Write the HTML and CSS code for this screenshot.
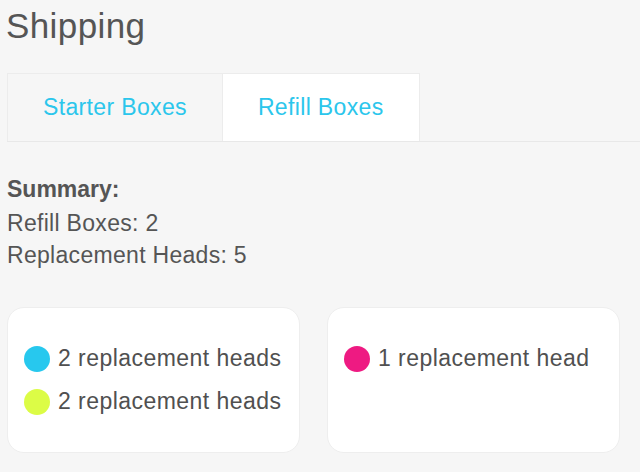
FILE: index.html
```html
<!DOCTYPE html>
<html lang="en">
<head>
<meta charset="utf-8">
<title>Shipping</title>
<link rel="stylesheet" href="styles.css">
</head>
<body>
<main class="page">
  <h1 class="title">Shipping</h1>
  <nav class="tabs">
    <div class="tab">Starter Boxes</div>
    <div class="tab tab-active">Refill Boxes</div>
  </nav>
  <section class="summary">
    <p class="summary-title">Summary:</p>
    <p class="summary-line">Refill Boxes: 2</p>
    <p class="summary-line">Replacement Heads: 5</p>
  </section>
  <section class="cards">
    <div class="card">
      <div class="row"><span class="dot dot-blue"></span><span class="row-text">2 replacement heads</span></div>
      <div class="row"><span class="dot dot-lime"></span><span class="row-text">2 replacement heads</span></div>
    </div>
    <div class="card">
      <div class="row"><span class="dot dot-pink"></span><span class="row-text">1 replacement head</span></div>
    </div>
  </section>
</main>
</body>
</html>
```
FILE: styles.css
```css
html, body {
  margin: 0;
  padding: 0;
  background: #f6f6f6;
}
body {
  font-family: "Liberation Sans", Arial, Helvetica, sans-serif;
  color: #505050;
}
.page {
  padding: 6px 0 0 7px;
}
.title {
  margin: 0 0 27px -1px;
  font-size: 35px;
  line-height: 40px;
  letter-spacing: 0.4px;
  font-weight: normal;
  color: #555555;
}
.tabs {
  display: flex;
  border-bottom: 1px solid #e8e8e8;
}
.tab {
  box-sizing: border-box;
  height: 68px;
  display: flex;
  align-items: center;
  padding: 0 35px;
  border: 1px solid #ececec;
  border-bottom: none;
  font-size: 23px;
  letter-spacing: 0.35px;
  color: #2bc6ec;
  background: #f6f6f6;
}
.tab + .tab {
  border-left: none;
}
.tab-active {
  background: #ffffff;
}
.summary {
  margin-top: 31px;
}
.summary p {
  margin: 0;
  font-size: 23px;
  line-height: 32px;
  letter-spacing: 0.3px;
  color: #555555;
}
.summary .summary-title {
  font-weight: bold;
  letter-spacing: 0;
  margin-bottom: 2px;
}
.cards {
  display: grid;
  grid-template-columns: 293px 293px;
  gap: 27px;
  margin-top: 36px;
}
.card {
  box-sizing: border-box;
  height: 146px;
  background: #ffffff;
  border: 1px solid #eeeeee;
  border-radius: 17px;
  padding: 29px 16px;
}
.row {
  display: flex;
  align-items: center;
  height: 43px;
}
.dot {
  width: 26px;
  height: 26px;
  border-radius: 50%;
  flex: none;
  margin-right: 8px;
}
.dot-blue { background: #27c8ee; }
.dot-lime { background: #dcfc46; }
.dot-pink { background: #ee1a82; }
.row-text {
  font-size: 23px;
  letter-spacing: 0.45px;
  color: #505050;
}
```
